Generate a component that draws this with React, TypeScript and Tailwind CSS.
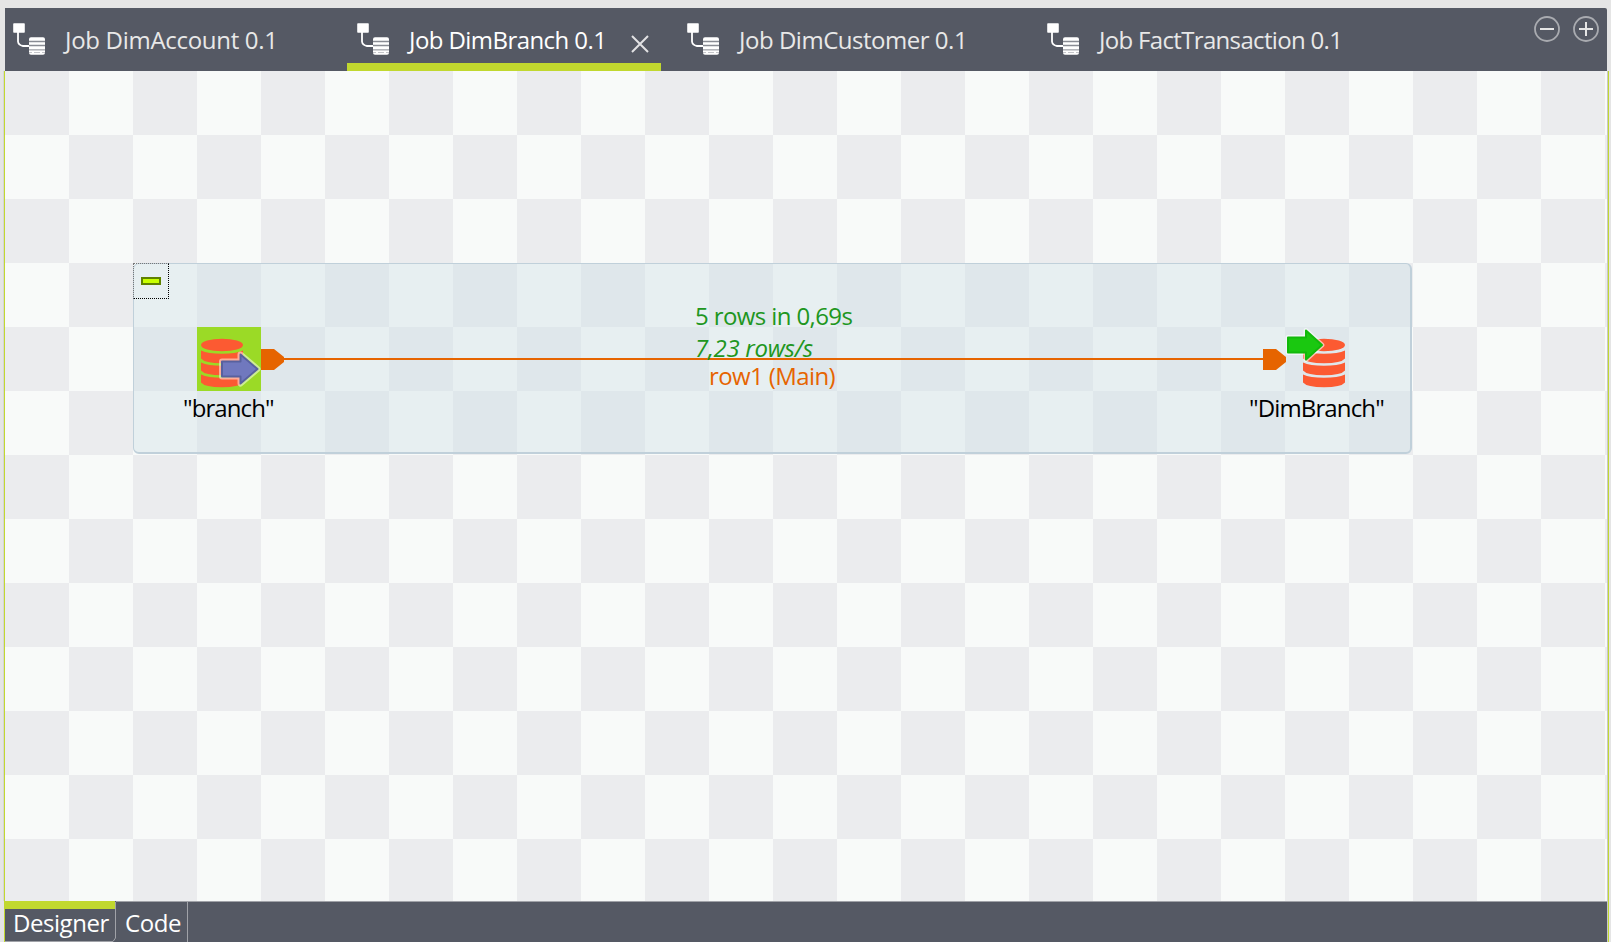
import type { ReactNode } from "react";

function JobIcon() {
  return (
    <svg width="33" height="33" viewBox="0 0 33 33" className="block shrink-0">
      <rect x="0.2" y="0.2" width="11.6" height="9.6" rx="0.8" fill="#fff" />
      <path d="M5 9v9.500q.3 3.500 5 4.500h7" fill="none" stroke="#fff" strokeWidth="1.800" />
      <rect x="16" y="14.200" width="16" height="17.600" rx="2" fill="#fff" />
      <path d="M16 18.500h16M16 22.500h16" stroke="#888b93" strokeWidth="1.300" />
      <path d="M16 26.800h16" stroke="#b4b6bb" strokeWidth="1.600" />
      <path d="M16 29.500h3M21 29.500h6M29 29.500h3" stroke="#c4c5c9" strokeWidth="1.200" />
    </svg>
  );
}

function Tab({ className, textClassName, label, children }: { className: string; textClassName: string; label: string; children?: ReactNode }) {
  return (
    <div className={`flex h-[63px] shrink-0 ${className}`}>
      <div className="pt-[15px]"><JobIcon /></div>
      <span className={`ml-[19px] pt-[15px] text-[24px] leading-[34px] whitespace-nowrap ${textClassName}`}>{label}</span>
      {children}
    </div>
  );
}

function Database({ children, shifted }: { children: ReactNode; shifted?: boolean }) {
  return (
    <svg width="64" height="64" viewBox="0 0 64 64" className="block">
      <g transform={shifted ? "translate(14 0)" : undefined} fill="#fc5a32">
        <ellipse cx="25" cy="18" rx="21" ry="6.200" />
        <path d="M4 23.500Q11 26.700 25 26.700T46 23.500V31.500Q42 36.300 25 36.300T4 31.500z" />
        <path d="M4 35.500Q11 38.700 25 38.700T46 35.500V43.500Q42 48.300 25 48.300T4 43.500z" />
        <path d="M4 47.500Q11 50.700 25 50.700T46 47.500V55.500Q42 60.300 25 60.300T4 55.500z" />
      </g>
      {children}
    </svg>
  );
}

function Connector({ className }: { className: string }) {
  return (
    <svg width="24" height="21" viewBox="0 0 24 21" className={`absolute top-[278px] ${className}`}>
      <path d="M0 0h13l10 8v5l-10 8H0z" fill="#e66400" />
    </svg>
  );
}

export default function App() {
  return (
    <div className="flex h-[942px] w-[1611px] flex-col overflow-hidden bg-[#e5e5e5] pt-2 font-['Open_Sans','Noto_Sans',sans-serif]">
      <header className="ml-[5px] flex h-[63px] w-[1602px] shrink-0 rounded-tr-[2px] bg-[#555964] text-[#e8e8e8]">
        <Tab className="w-[342px] pl-2" textClassName="tracking-[-0.3px]" label="Job DimAccount 0.1" />
        <Tab className="w-[314px] border-b-8 border-[#c1d82f] pl-[10px]" textClassName="tracking-[-0.57px] text-white" label="Job DimBranch 0.1">
          <svg width="18" height="18" viewBox="0 0 18 18" className="mt-[27px] mr-[12px] ml-auto">
            <path d="m1 1 16 16M17 1 1 17" stroke="#e2e2e4" strokeWidth="2" />
          </svg>
        </Tab>
        <Tab className="w-[360px] pl-[26px]" textClassName="tracking-[-0.48px]" label="Job DimCustomer 0.1" />
        <Tab className="pl-[26px]" textClassName="tracking-[-0.67px]" label="Job FactTransaction 0.1" />
        <div className="ml-auto flex gap-[13px] pt-2 pr-2">
          {["M6 13h14", "M6 13h14M13 6v14"].map((d) => (
            <svg key={d} width="26" height="26" viewBox="0 0 26 26">
              <circle cx="13" cy="13" r="12" fill="none" stroke="#a9abb0" strokeWidth="1.800" />
              <path d={d} stroke="#e5e5e5" strokeWidth="2" />
            </svg>
          ))}
        </div>
      </header>

      <main className="flex h-[830px] shrink-0">
        <div className="ml-[3px] w-px bg-[#d5d5d5]" />
        <div className="w-px bg-[#c1d82f]" />
        <div className="relative h-[830px] w-[1602px] overflow-hidden bg-[conic-gradient(#f8faf9_25%,#ebecee_0_50%,#f8faf9_0_75%,#ebecee_0)] bg-[length:128px_128px]">
          <div className="absolute top-[192px] left-[128px] h-[191px] w-[1279px] rounded-[6px] border-t border-r-2 border-b-2 border-l border-[#c0d0da] bg-[#d0e0e8]/42" />
          <div className="absolute top-[192px] left-[128px] h-9 w-9 border border-dotted border-black border-t-[#777] border-l-[#777]">
            <div className="mt-[13px] ml-[7px] h-2 w-5 border-2 border-[#5f8200] bg-[#c8ff00]" />
          </div>
          <div className="absolute top-[287px] left-[275px] h-[2px] w-[990px] bg-[#e66400]" />
          <Connector className="left-[256px]" />
          <Connector className="left-[1258px]" />

          <div className="absolute top-[256px] left-[192px] bg-[#9bda26]">
            <Database>
              <g strokeLinejoin="round">
                <path d="M25 34.500h18.500v-7L60.500 42l-17 14.500v-7H25z" fill="none" stroke="#fff" strokeOpacity=".5" strokeWidth="6" />
                <path d="M25 34.500h18.500v-7L60.500 42l-17 14.500v-7H25z" fill="#7078be" stroke="#58619e" strokeWidth="2" />
              </g>
            </Database>
          </div>
          <div className="absolute top-[256px] left-[1280px]">
            <Database shifted>
              <g strokeLinejoin="round">
                <path d="M3 10.500h18v-7L37 18 21 32.500v-7H3z" fill="none" stroke="#fff" strokeOpacity=".6" strokeWidth="5" />
                <path d="M3 10.500h18v-7L37 18 21 32.500v-7H3z" fill="#1ac810" stroke="#12b90c" strokeWidth="2" />
              </g>
            </Database>
          </div>
          <span className="absolute top-[320px] left-[178px] text-[24px] leading-[34px] tracking-[-0.9px]">"branch"</span>
          <span className="absolute top-[320px] left-[1244px] text-[24px] leading-[34px] tracking-[-0.87px]">"DimBranch"</span>
          <span className="absolute top-[228px] left-[690px] text-[24px] leading-[34px] tracking-[-0.6px] text-[#209620]">5 rows in 0,69s</span>
          <span className="absolute top-[260px] left-[690px] text-[24px] leading-[34px] tracking-[-0.3px] text-[#209620] italic">7,23 rows/s</span>
          <span className="absolute top-[288px] left-[704px] text-[24px] leading-[34px] tracking-[-0.6px] text-[#e66400]">row1 (Main)</span>
        </div>
        <div className="w-px bg-[#c8c8c8]" />
        <div className="w-px bg-[#c1d82f]" />
      </main>

      <footer className="ml-[4px] flex h-[41px] w-[1605px] shrink-0 border-x border-[#c1d82f] bg-[#555964] text-[24px] leading-[33px] text-white">
        <div className="h-[41px] w-[108px] border-t-8 border-b border-t-[#c1d82f] border-b-[#a0a2a8] pl-2 tracking-[-0.45px]">
          <div className="-mt-[3px]">Designer</div>
        </div>
        <svg width="3" height="41" viewBox="0 0 3 41">
          <path d="M0 0h2v8H0z" fill="#c1d82f" />
          <path d="M2.500 1v36L0 40.500" fill="none" stroke="#a0a2a8" />
        </svg>
        <div className="w-[72px] border-t border-r border-[#a0a2a8] pt-1 pl-[9px] tracking-[-0.45px]">Code</div>
        <div className="grow border-t border-[#a0a2a8]" />
        <div className="w-px bg-[#c8c8c8]" />
      </footer>
    </div>
  );
}
